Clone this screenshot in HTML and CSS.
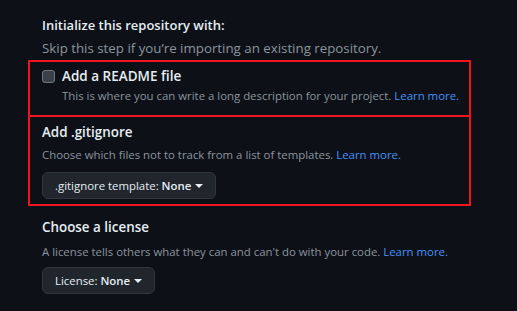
FILE: index.html
```html
<!DOCTYPE html>
<html lang="en">
<head>
  <meta charset="UTF-8" />
  <title>Initialize this repository</title>
  <link rel="stylesheet" href="styles.css">
</head>
<body>
  <div class="page">
    <div class="intro">
      <h3>Initialize this repository with:</h3>
      <p class="note">Skip this step if you’re importing an existing repository.</p>
    </div>

    <!-- README -->
    <div class="marked readme">
      <label class="check-row">
        <input type="checkbox" />
        <span class="check-title">Add a README file</span>
      </label>
      <p class="hint indent">This is where you can write a long description for your project. <a href="#">Learn more.</a></p>
    </div>

    <!-- .gitignore -->
    <div class="marked gitignore">
      <h4>Add .gitignore</h4>
      <p class="hint">Choose which files not to track from a list of templates. <a href="#">Learn more.</a></p>
      <button class="select-btn"><span>.gitignore template: <b>None</b></span><span class="caret"></span></button>
    </div>

    <!-- License -->
    <div class="plain license">
      <h4>Choose a license</h4>
      <p class="hint">A license tells others what they can and can't do with your code. <a href="#">Learn more.</a></p>
      <button class="select-btn"><span>License: <b>None</b></span><span class="caret"></span></button>
    </div>
  </div>
</body>
</html>
```

FILE: styles.css
```css
/* --- Base --- */
* {
  margin: 0;
  padding: 0;
  box-sizing: border-box;
}
html,
body {
  height: 100%;
  background: #0d1117;
  color: #e6edf3;
  font-family: "Open Sans", sans-serif;
}

.page {
  padding: 15px 0 0 28px;
  width: 471px;
}

/* --- Intro --- */
.intro {
  padding-left: 14px;
}
.intro h3 {
  font-size: 13px;
  font-weight: 600;
  line-height: 21px;
}
.note {
  font-size: 13.3px;
  line-height: 21px;
  color: #8b949e;
  margin-top: 2px;
  white-space: nowrap;
}

/* --- Red highlighted blocks --- */
.marked {
  border: 2px solid #f0141e;
  padding: 0 12px;
}
.readme {
  margin-top: 1px;
  padding-top: 4px;
  height: 57px;
}
.gitignore {
  margin-top: -2px;
  padding-top: 5px;
  height: 91px;
}
.plain {
  padding: 0 14px;
}
.license {
  margin-top: 11px;
}

.check-row {
  display: flex;
  align-items: center;
  gap: 7px;
  height: 20px;
}
.check-row input {
  appearance: none;
  width: 13px;
  height: 13px;
  border: 1px solid #6e7681;
  border-radius: 3px;
  background: #3b4048;
}
.check-title {
  font-size: 13.5px;
  font-weight: 600;
}

h4 {
  font-size: 13.4px;
  font-weight: 600;
  line-height: 21px;
}

.hint {
  font-size: 11.4px;
  line-height: 18px;
  color: #8b949e;
  margin-top: 3px;
  white-space: nowrap;
}
.hint.indent {
  margin-left: 20px;
  margin-top: 1px;
}
.license .hint {
  margin-top: 5px;
}
.hint a {
  color: #4493f8;
  text-decoration: none;
}

/* --- Select buttons --- */
.select-btn {
  display: flex;
  align-items: center;
  gap: 4px;
  margin-top: 8px;
  height: 27px;
  padding: 0 12px 0 12px;
  background: #21262d;
  border: 1px solid #30363d;
  border-radius: 6px;
  color: #e6edf3;
  font-family: inherit;
  font-size: 11.4px;
}
.license .select-btn {
  margin-top: 6px;
}
.select-btn b {
  font-weight: 600;
}
.caret {
  width: 0;
  height: 0;
  border-left: 4px solid transparent;
  border-right: 4px solid transparent;
  border-top: 4px solid #e6edf3;
}
```
